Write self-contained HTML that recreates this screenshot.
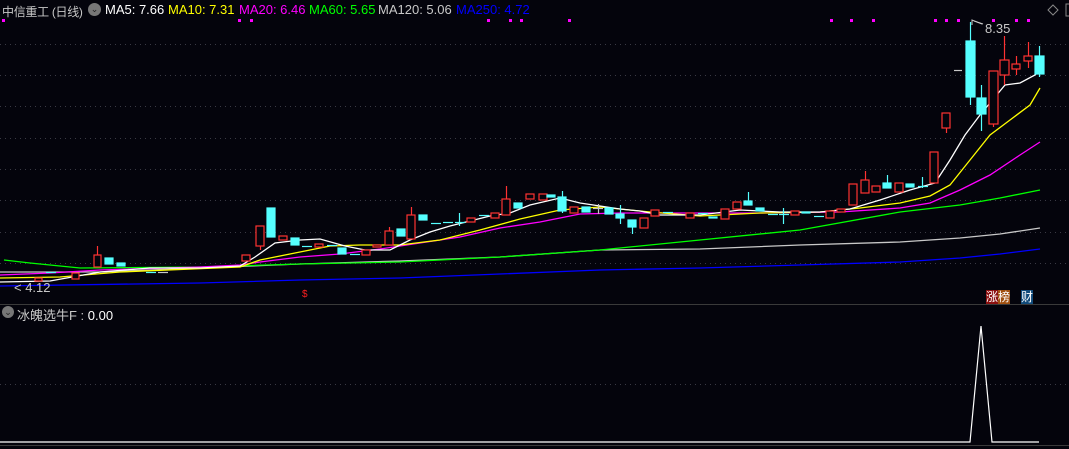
<!DOCTYPE html><html><head><meta charset="utf-8"><style>
body{margin:0;background:#04040c;width:1069px;height:449px;overflow:hidden;font-family:"Liberation Sans","Noto Sans CJK SC",sans-serif}
.t{position:absolute;top:2px;font-size:13px;white-space:nowrap}
</style></head><body>
<svg width="1069" height="449" style="position:absolute;left:0;top:0" xmlns="http://www.w3.org/2000/svg">
<g stroke="#3a3a44" stroke-dasharray="1 4" stroke-width="1">
<line x1="0" y1="44.5" x2="1069" y2="44.5"/><line x1="0" y1="75.5" x2="1069" y2="75.5"/><line x1="0" y1="106.5" x2="1069" y2="106.5"/><line x1="0" y1="138.5" x2="1069" y2="138.5"/><line x1="0" y1="169.5" x2="1069" y2="169.5"/><line x1="0" y1="200.5" x2="1069" y2="200.5"/><line x1="0" y1="232.5" x2="1069" y2="232.5"/><line x1="0" y1="263.5" x2="1069" y2="263.5"/><line x1="0" y1="384.5" x2="1069" y2="384.5"/>
</g>
<line x1="0" y1="304.5" x2="1069" y2="304.5" stroke="#3a3a3a"/>
<line x1="0" y1="445.5" x2="1069" y2="445.5" stroke="#3a3a3a"/>
<g fill="#ff00ff"><rect x="2" y="19" width="3" height="3"/><rect x="238" y="19" width="3" height="3"/><rect x="250" y="19" width="3" height="3"/><rect x="487" y="19" width="3" height="3"/><rect x="509" y="19" width="3" height="3"/><rect x="520" y="19" width="3" height="3"/><rect x="568" y="19" width="3" height="3"/><rect x="830" y="19" width="3" height="3"/><rect x="850" y="19" width="3" height="3"/><rect x="872" y="19" width="3" height="3"/><rect x="934" y="19" width="3" height="3"/><rect x="945" y="19" width="3" height="3"/><rect x="957" y="19" width="3" height="3"/><rect x="992" y="19" width="3" height="3"/><rect x="1015" y="19" width="3" height="3"/><rect x="1027" y="19" width="3" height="3"/></g>
<g fill="none" stroke-width="1.3">
<polyline stroke="#0000ff" points="0,286 200,283 300,280 400,278 500,274 600,270 700,268 800,265 900,262 960,258 1000,254 1040,249"/>
<polyline stroke="#c8c8c8" points="0,272 100,272 200,268 300,264 400,261 500,257 600,250 700,249 800,245 900,242 960,238 1000,234 1040,228"/>
<polyline stroke="#00ff00" points="4,260 30,263 80,268 200,267 300,264 400,262 500,257 600,250 700,240 800,230 900,212 960,205 1000,198 1040,190"/>
<polyline stroke="#ff00ff" points="0,275 50,273 100,270 200,267 240,265 260,262 300,257 340,254 380,249 420,243 460,237 500,228 540,222 580,214 620,213 680,213 760,213 840,212 900,208 930,203 960,190 990,175 1020,155 1040,142"/>
<polyline stroke="#ffff00" points="0,278 60,277 120,272 240,267 260,260 290,254 330,246 360,245 400,245 440,240 480,230 520,219 560,210 600,207 650,212 700,216 760,213 820,212 860,208 900,203 930,196 950,185 970,160 990,135 1010,120 1030,105 1040,88"/>
<polyline stroke="#ffffff" points="0,282 50,281 100,272 150,268 200,268 240,266 255,257 275,243 300,240 320,239 345,246 365,250 390,250 410,240 430,232 450,226 470,221 490,216 510,213 530,205 560,198 580,203 600,206 620,209 640,211 660,215 700,215 740,210 780,212 820,212 850,209 880,200 910,190 935,183 950,160 965,135 980,115 995,97 1005,85 1020,83 1035,75 1040,70"/>
</g>
<g stroke-width="1.2">
<g stroke="#ff3232" fill="#04040c">
<rect x="72" y="273" width="7" height="6"/><rect x="35" y="278" width="7" height="3"/><line x1="97.5" y1="246" x2="97.5" y2="255"/><rect x="94" y="255" width="7" height="12"/>
<rect x="242" y="255" width="8" height="6"/><line x1="260.5" y1="246" x2="260.5" y2="250"/><rect x="256" y="226" width="8" height="20"/>
<rect x="279" y="236" width="8" height="4"/><rect x="315" y="244" width="8" height="3"/><rect x="362" y="250" width="8" height="5"/><rect x="373" y="245" width="8" height="2"/>
<line x1="389.5" y1="227" x2="389.5" y2="231"/><rect x="385" y="231" width="8" height="14"/>
<line x1="411.5" y1="207" x2="411.5" y2="215"/><rect x="407" y="215" width="8" height="24"/>
<rect x="467" y="218" width="8" height="4"/><rect x="491" y="213" width="8" height="5"/>
<line x1="506.5" y1="186" x2="506.5" y2="199"/><rect x="502" y="199" width="8" height="16"/>
<rect x="526" y="194" width="8" height="5"/><rect x="539" y="194" width="8" height="6"/>
<rect x="570" y="207" width="8" height="6"/><rect x="640" y="218" width="8" height="10"/><rect x="651" y="210" width="8" height="6"/>
<rect x="686" y="213" width="8" height="5"/><rect x="721" y="209" width="8" height="10"/><rect x="733" y="202" width="8" height="7"/>
<rect x="791" y="211" width="8" height="4"/><rect x="826" y="211" width="8" height="7"/><rect x="837" y="209" width="8" height="3"/>
<rect x="849" y="184" width="8" height="21"/><line x1="865.5" y1="171" x2="865.5" y2="180"/><rect x="861" y="180" width="8" height="13"/>
<rect x="872" y="186" width="8" height="6"/><rect x="895" y="183" width="8" height="9"/>
<rect x="930" y="152" width="8" height="31"/><line x1="946.5" y1="128" x2="946.5" y2="133"/><rect x="942" y="113" width="8" height="15"/>
<line x1="993.5" y1="124" x2="993.5" y2="127"/><rect x="989" y="71" width="9" height="53"/>
<line x1="1004.5" y1="36" x2="1004.5" y2="85"/><rect x="1000" y="60" width="9" height="15"/>
<line x1="1016.5" y1="56" x2="1016.5" y2="75"/><rect x="1012" y="64" width="8" height="5"/>
<line x1="1028.5" y1="42" x2="1028.5" y2="68"/><rect x="1024" y="56" width="8" height="5"/>
</g>
<g stroke="#55ffff" fill="#55ffff">
<rect x="105" y="258" width="8" height="6"/><rect x="117" y="263" width="8" height="3"/><line x1="46" y1="272.5" x2="56" y2="272.5"/><line x1="146" y1="272.5" x2="156" y2="272.5"/>
<rect x="267" y="208" width="8" height="29"/><rect x="291" y="238" width="8" height="7"/><line x1="302" y1="246.5" x2="312" y2="246.5"/><line x1="327" y1="245.5" x2="337" y2="245.5"/>
<rect x="338" y="248" width="8" height="6"/><line x1="350" y1="254.5" x2="360" y2="254.5"/>
<rect x="397" y="229" width="8" height="7"/><rect x="419" y="215" width="8" height="5"/><line x1="431" y1="223.5" x2="441" y2="223.5"/><line x1="443" y1="222.5" x2="453" y2="222.5"/><line x1="459.5" y1="213" x2="459.5" y2="226"/><line x1="455" y1="222.5" x2="465" y2="222.5"/><line x1="479" y1="215.5" x2="489" y2="215.5"/>
<rect x="514" y="203" width="8" height="5"/><rect x="547" y="195" width="8" height="2"/><line x1="562.5" y1="191" x2="562.5" y2="213"/><rect x="558" y="197" width="8" height="14"/>
<rect x="582" y="207" width="8" height="5"/><rect x="605" y="208" width="8" height="6"/><line x1="620.5" y1="205" x2="620.5" y2="224"/><rect x="616" y="214" width="8" height="4"/>
<line x1="632.5" y1="227" x2="632.5" y2="234"/><rect x="628" y="220" width="8" height="7"/><line x1="663" y1="212.5" x2="673" y2="212.5"/><line x1="698" y1="213.5" x2="708" y2="213.5"/><rect x="709" y="217" width="8" height="1"/>
<line x1="748.5" y1="192" x2="748.5" y2="201"/><rect x="744" y="201" width="8" height="4"/><rect x="756" y="208" width="8" height="3"/><line x1="768" y1="214.5" x2="778" y2="214.5"/><line x1="783.5" y1="208" x2="783.5" y2="224"/><line x1="779" y1="214.5" x2="789" y2="214.5"/><rect x="802" y="212" width="8" height="1"/><line x1="814" y1="216.5" x2="824" y2="216.5"/>
<line x1="887.5" y1="175" x2="887.5" y2="183"/><rect x="883" y="183" width="8" height="5"/><rect x="906" y="184" width="8" height="3"/><line x1="922.5" y1="177" x2="922.5" y2="188"/><line x1="918" y1="186.5" x2="928" y2="186.5"/>
<line x1="970.5" y1="22" x2="970.5" y2="105"/><rect x="966" y="41" width="9" height="56"/>
<line x1="981.5" y1="85" x2="981.5" y2="131"/><rect x="977" y="98" width="9" height="16"/>
<line x1="1039.5" y1="46" x2="1039.5" y2="77"/><rect x="1035" y="56" width="9" height="18"/>
</g>
<g stroke="#c8c8c8"><line x1="593" y1="208.5" x2="603" y2="208.5"/><line x1="598.5" y1="204" x2="598.5" y2="214"/><line x1="158" y1="272.5" x2="168" y2="272.5"/><line x1="954" y1="70.5" x2="962" y2="70.5"/></g>
</g>
<polyline fill="none" stroke="#c8c8c8" points="982,24 972,20 972,25"/><line x1="974" y1="21" x2="983" y2="24" stroke="#c8c8c8"/>
<polyline fill="none" stroke="#fff" stroke-width="1.2" points="0,442 970,442 981,326 992,442 1039,442"/>
<path d="M1053 5 l5 5 -5 5 -5 -5z" fill="none" stroke="#888"/><rect x="1066" y="4" width="5" height="12" fill="none" stroke="#888"/>
</svg>
<div class="t" style="left:2px;top:3px;color:#c8c8c8;font-size:12px;letter-spacing:-0.3px">中信重工 (日线)</div>
<div style="position:absolute;left:88px;top:3px;width:13px;height:13px;border-radius:50%;background:#777;color:#222;font-size:9px;text-align:center;line-height:13px">⌄</div>
<div class="t" style="left:105px;color:#fff">MA5: 7.66</div>
<div class="t" style="left:168px;color:#ffff00">MA10: 7.31</div>
<div class="t" style="left:239px;color:#ff00ff">MA20: 6.46</div>
<div class="t" style="left:309px;color:#00ff00">MA60: 5.65</div>
<div class="t" style="left:378px;color:#c8c8c8">MA120: 5.06</div>
<div class="t" style="left:456px;color:#0000ff">MA250: 4.72</div>
<div class="t" style="left:985px;top:21px;color:#c8c8c8">8.35</div>
<div class="t" style="left:14px;top:280px;color:#c8c8c8">&lt; 4.12</div>
<div style="position:absolute;left:302px;top:289px;color:#ff2020;font-size:10px">$</div>
<div style="position:absolute;left:986px;top:290px;font-size:12px;line-height:14px"><span style="background:#8b1010;color:#fff">涨</span><span style="background:#a05010;color:#fff">榜</span></div>
<div style="position:absolute;left:1021px;top:290px;font-size:12px;line-height:14px;background:#104a7a;color:#fff">财</div>
<div style="position:absolute;left:2px;top:306px;width:12px;height:12px;border-radius:50%;background:#777;color:#222;font-size:9px;text-align:center;line-height:12px">⌄</div>
<div class="t" style="left:17px;top:305px;color:#c8c8c8">冰魄选牛F : <span style="color:#fff">0.00</span></div>
</body></html>
